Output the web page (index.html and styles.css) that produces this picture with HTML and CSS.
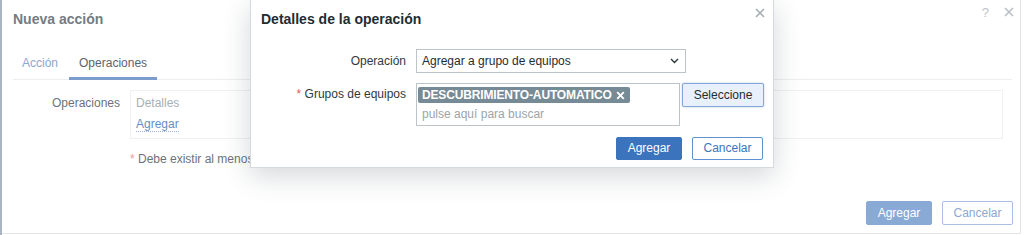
FILE: index.html
```html
<!DOCTYPE html>
<html lang="es">
<head>
<meta charset="utf-8">
<title>Nueva acción</title>
<link rel="stylesheet" href="styles.css">
</head>
<body>
<div class="screen">
  <div class="rail"></div>
  <section class="main-dialog">
    <header class="md-head">
      <h1 class="md-title">Nueva acción</h1>
      <div class="md-icons">
        <span class="md-help">?</span>
        <svg class="md-close" width="10" height="10" viewBox="0 0 10 10"><path d="M1 1L9 9M9 1L1 9" stroke="#b9bfc4" stroke-width="1.6" fill="none"/></svg>
      </div>
    </header>
    <nav class="tabs">
      <span class="tab">Acción</span>
      <span class="tab tab-active">Operaciones</span>
    </nav>
    <div class="md-form">
      <div class="md-row">
        <div class="md-label">Operaciones</div>
        <div class="ops-box">
          <div class="ops-head">Detalles</div>
          <div class="ops-link-line"><span class="ops-link">Agregar</span></div>
        </div>
      </div>
      <div class="md-note"><span class="md-star">*</span> Debe existir al menos una operación.</div>
    </div>
    <footer class="md-foot">
      <button class="md-btn md-btn-primary">Agregar</button>
      <button class="md-btn md-btn-secondary">Cancelar</button>
    </footer>
  </section>
</div>

<div class="op-dialog">
  <header class="op-head">
    <h2 class="op-title">Detalles de la operación</h2>
  </header>
  <svg class="op-close" width="10" height="10" viewBox="0 0 10 10"><path d="M1 1L9 9M9 1L1 9" stroke="#a3acb2" stroke-width="1.6" fill="none"/></svg>
  <div class="op-form">
    <div class="op-label">Operación</div>
    <div class="op-field">
      <div class="op-select">
        <span>Agregar a grupo de equipos</span>
        <svg class="op-chevron" width="9" height="6" viewBox="0 0 9 6"><path d="M1 1L4.5 4.5L8 1" stroke="#2b363c" stroke-width="1.4" fill="none"/></svg>
      </div>
    </div>
    <div class="op-label op-label-ms"><span class="op-star">*</span> Grupos de equipos</div>
    <div class="op-field op-field-ms">
      <div class="op-ms">
        <div class="op-ms-tags">
          <span class="op-tag">DESCUBRIMIENTO-AUTOMATICO<svg class="op-tag-x" width="9" height="9" viewBox="0 0 9 9"><path d="M1.2 1.2L7.8 7.8M7.8 1.2L1.2 7.8" stroke="#ffffff" stroke-width="1.9" fill="none"/></svg></span>
        </div>
        <div class="op-ms-input">pulse aquí para buscar</div>
      </div>
      <button class="op-btn op-btn-select">Seleccione</button>
    </div>
  </div>
  <footer class="op-foot">
    <button class="op-btn op-btn-primary">Agregar</button>
    <button class="op-btn op-btn-secondary">Cancelar</button>
  </footer>
</div>
</body>
</html>
```

FILE: styles.css
```css
* { box-sizing: border-box; }

html, body {
  margin: 0;
  padding: 0;
  background: #ffffff;
}

body {
  width: 1024px;
  height: 235px;
  overflow: hidden;
  position: relative;
  font-family: "Liberation Sans", Arial, sans-serif;
  font-size: 12px;
  color: #1f2c33;
}

button {
  font-family: "Liberation Sans", Arial, sans-serif;
  font-size: 12px;
  margin: 0;
  cursor: pointer;
}

/* ---------- background (dimmed) dialog ---------- */
.screen {
  display: flex;
  height: 235px;
}

.rail {
  width: 2px;
  background: #a9b5c3;
  flex: none;
}

.main-dialog {
  width: 1019px;
  height: 234px;
  border-right: 1px solid #e2e5e8;
  border-bottom: 1px solid #e2e5e8;
  display: flex;
  flex-direction: column;
  padding: 0 0 0 10px;
}

.md-head {
  height: 48px;
  display: flex;
  justify-content: space-between;
  padding-top: 10px;
  flex: none;
}

.md-title {
  margin: 0 0 0 1px;
  font-size: 14px;
  font-weight: bold;
  line-height: 18px;
  color: #737c84;
}

.md-icons {
  display: flex;
  align-items: flex-start;
  gap: 15px;
  padding-right: 6px;
  margin-top: -3px;
}

.md-help {
  font-size: 13px;
  line-height: 14px;
  color: #bcc2c7;
  margin-top: -1px;
}

.md-close {
  margin-top: 0;
}

.tabs {
  display: flex;
  gap: 1px;
  height: 32px;
  margin-right: 8px;
  margin-left: 1px;
  box-shadow: inset 0 -1px 0 #eceff1;
  flex: none;
}

.tab {
  padding: 8px 10px 7px;
  line-height: 14px;
  border-bottom: 3px solid transparent;
  color: #8ea6cb;
}

.tab:first-child {
  margin-left: -1px;
}

.tab-active {
  color: #5b646b;
  border-bottom-color: #7b9ccc;
}

.md-form {
  padding-top: 10px;
}

.md-row {
  display: flex;
  gap: 10px;
}

.md-label {
  width: 108px;
  text-align: right;
  padding-top: 6px;
  line-height: 14px;
  color: #6b737a;
}

.ops-box {
  width: 873px;
  height: 49px;
  border: 1px solid #eff1f3;
  padding: 5px 5px 6px;
}

.ops-head {
  line-height: 14px;
  color: #a7afb5;
}

.ops-link-line {
  margin-top: 7px;
  line-height: 14px;
}

.ops-link {
  color: #6a8dc5;
  border-bottom: 1px dotted #9db3d9;
}

.md-note {
  margin: 13px 0 0 118px;
  line-height: 14px;
  color: #6b737a;
}

.md-star {
  color: #eb9a9a;
}

.md-foot {
  margin-top: auto;
  display: flex;
  justify-content: flex-end;
  gap: 10px;
  padding: 0 7px 8px 0;
}

.md-btn {
  height: 24px;
  padding: 0 10px;
  border-radius: 2px;
  line-height: 22px;
}

.md-btn-primary {
  width: 66px;
  background: #8aaad6;
  border: 1px solid #8aaad6;
  color: #ffffff;
}

.md-btn-secondary {
  width: 71px;
  background: #ffffff;
  border: 1px solid #a9c0e4;
  color: #8ba7d3;
}

/* ---------- operation details dialog (overlay) ---------- */
.op-dialog {
  position: absolute;
  left: 250px;
  top: -1px;
  width: 524px;
  background: #ffffff;
  border: 1px solid #d4d9dd;
  box-shadow: 0 8px 26px rgba(40, 55, 70, 0.2);
}

.op-head {
  height: 49px;
  padding: 10px 10px 0;
}

.op-title {
  margin: 0;
  font-size: 14px;
  font-weight: bold;
  line-height: 18px;
  color: #1f2c33;
}

.op-close {
  position: absolute;
  top: 8px;
  right: 8px;
}

.op-form {
  display: grid;
  grid-template-columns: 145px auto;
  column-gap: 10px;
  row-gap: 10px;
  padding: 0 10px;
}

.op-label {
  text-align: right;
  padding-top: 5px;
  line-height: 14px;
  color: #2f3a40;
}

.op-label-ms {
  padding-top: 4px;
}

.op-star {
  color: #e45959;
}

.op-field {
  display: flex;
  align-items: flex-start;
}

.op-field-ms {
  gap: 2px;
}

.op-select {
  width: 270px;
  height: 24px;
  border: 1px solid #bcc4c9;
  display: flex;
  align-items: center;
  justify-content: space-between;
  padding: 0 6px 0 5px;
  line-height: 14px;
  color: #1f2c33;
}

.op-chevron {
  display: block;
}

.op-ms {
  width: 264px;
  height: 43px;
  border: 1px solid #bcc4c9;
}

.op-ms-tags {
  padding: 3px 1px 0;
  display: flex;
}

.op-tag {
  display: inline-flex;
  align-items: center;
  gap: 4px;
  height: 16px;
  padding: 0 5px 0 4px;
  background: #778b96;
  border-radius: 2px;
  color: #ffffff;
  font-weight: bold;
  line-height: 16px;
  letter-spacing: -0.15px;
}

.op-tag-x {
  display: block;
}

.op-ms-input {
  margin-top: 4px;
  padding-left: 5px;
  line-height: 14px;
  color: #9ba5ab;
}

.op-btn {
  height: 24px;
  padding: 0 8px;
  border-radius: 2px;
  line-height: 22px;
}

.op-btn-select {
  width: 82px;
  background: #e8f0fb;
  border: 1px solid #84a7d8;
  box-shadow: 0 0 2px rgba(61, 117, 190, 0.45);
  color: #1f2c33;
}

.op-foot {
  display: flex;
  justify-content: flex-end;
  gap: 10px;
  padding: 11px 10px 7px;
}

.op-btn-primary {
  width: 66px;
  height: 23px;
  background: #3b74bd;
  border: 1px solid #3b74bd;
  color: #ffffff;
  line-height: 21px;
}

.op-btn-secondary {
  width: 71px;
  height: 23px;
  background: #ffffff;
  border: 1px solid #5f8fcd;
  color: #3b74bd;
  line-height: 21px;
}
```
